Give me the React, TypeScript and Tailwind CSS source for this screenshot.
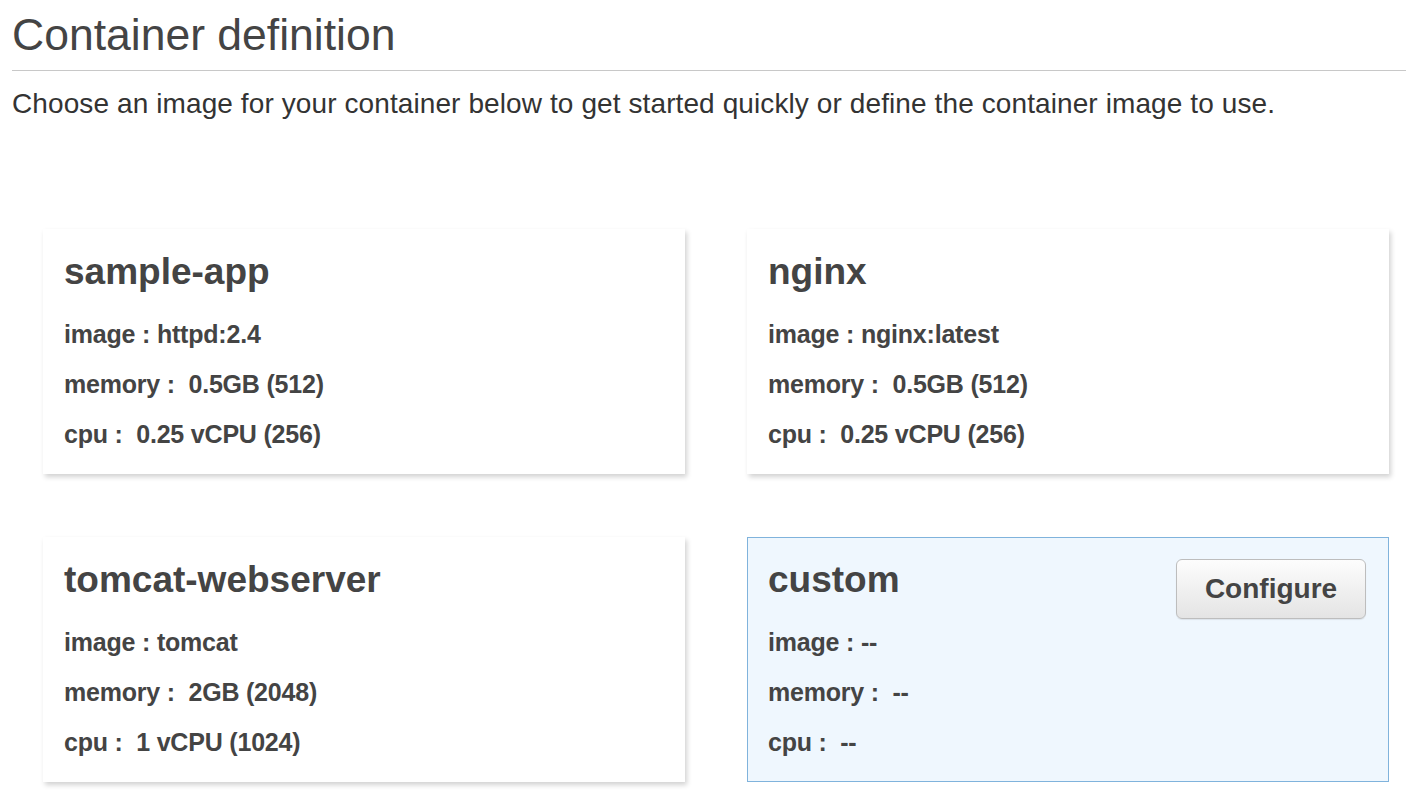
const cards = [
  { name: 'sample-app', image: 'httpd:2.4', memory: '0.5GB (512)', cpu: '0.25 vCPU (256)' },
  { name: 'nginx', image: 'nginx:latest', memory: '0.5GB (512)', cpu: '0.25 vCPU (256)' },
  { name: 'tomcat-webserver', image: 'tomcat', memory: '2GB (2048)', cpu: '1 vCPU (1024)' },
  { name: 'custom', image: '--', memory: '--', cpu: '--', custom: true },
];

const App = () => {
  return (
    <div className="min-h-screen bg-white text-[#444] font-['Liberation_Sans',Arial,sans-serif]">
      <div className="pl-3 pt-[9px]">
        <h1 className="text-[44.5px] leading-[52px] font-normal text-[#444]">Container definition</h1>
        <div className="mt-[9px] h-px bg-[#c8c8c8]" />
        <p className="mt-[18px] text-[28px] leading-[30px] text-[#333] tracking-[0.1px]">
          Choose an image for your container below to get started quickly or define the container image to use.
        </p>
      </div>

      <div className="ml-[43px] mt-[110px] grid grid-cols-[642px_642px] gap-x-[62px] gap-y-[63px]">
        {cards.map((c) => (
          <div
            key={c.name}
            className={`relative h-[245px] ${
              c.custom
                ? 'px-[20px] pt-[20px] bg-[#eff7fe] border border-[#80b3dc]'
                : 'px-[21px] pt-[21px] bg-white shadow-[2px_3px_5px_rgba(0,0,0,0.18)]'
            }`}
          >
            <h2 className="text-[37px] leading-[44px] font-bold text-[#444]">{c.name}</h2>
            <div className="mt-[25px] flex flex-col gap-[20px] text-[25px] leading-[30px] font-bold text-[#444] tracking-[-0.2px]">
              <div>image : {c.image}</div>
              <div>memory :&nbsp; {c.memory}</div>
              <div>cpu :&nbsp; {c.cpu}</div>
            </div>
            {c.custom && (
              <button className="absolute right-[22px] top-[21px] h-[60px] w-[190px] rounded-[6px] border border-[#bdbdbd] bg-gradient-to-b from-[#fdfdfd] to-[#e4e4e4] text-[28px] font-bold text-[#444] shadow-[0_1px_1px_rgba(0,0,0,0.08)]">
                Configure
              </button>
            )}
          </div>
        ))}
      </div>
    </div>
  );
};

export default App;
